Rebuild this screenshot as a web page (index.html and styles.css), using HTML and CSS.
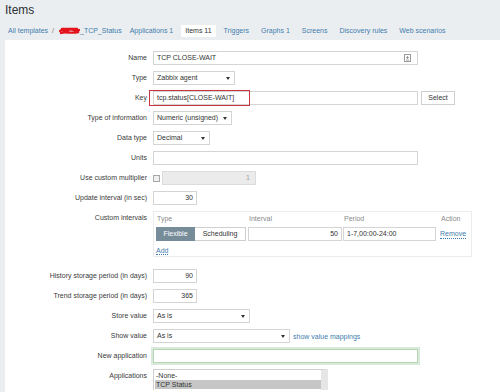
FILE: index.html
```html
<!DOCTYPE html>
<html lang="en">
<head>
    <meta charset="UTF-8">
    <title>Items</title>
    <link rel="stylesheet" href="styles.css">
</head>
<body>
    <h1 class="title">Items</h1>
    <nav class="tabs">
        <a class="crumb" href="#">All templates</a>
        <span class="sep">/</span>
        <a class="host" href="#"><svg class="scribble" width="21" height="8" viewBox="0 0 21 8"><path d="M1 4 C4 1 7 6 10 3 S16 6 20 3 M2 6 C6 4 12 7 19 5 M3 2 L18 2" stroke="#e3141c" stroke-width="2.4" fill="none" stroke-linecap="round"/></svg>_TCP_Status</a>
        <a href="#">Applications 1</a>
        <span class="tab-active">Items 11</span>
        <a href="#">Triggers</a>
        <a href="#">Graphs 1</a>
        <a href="#">Screens</a>
        <a href="#">Discovery rules</a>
        <a href="#">Web scenarios</a>
    </nav>
    <div class="panel">
        <div class="form">
            <div class="label">Name</div>
            <div class="field">
                <div class="input w-wide name-input">
                    <span>TCP CLOSE-WAIT</span>
                    <svg width="7" height="8" viewBox="0 0 7 8"><rect x="0.5" y="0.5" width="6" height="7" fill="#fff" stroke="#9a9a9a"/><path d="M3.5 2 V5 M2 3.5 H5 M2 6 H5" stroke="#8a8a8a" stroke-width="0.8"/></svg>
                </div>
            </div>

            <div class="label">Type</div>
            <div class="field"><div class="input select w-type">Zabbix agent</div></div>

            <div class="label">Key</div>
            <div class="field">
                <div class="key-wrap"><div class="input w-wide">tcp.status[CLOSE-WAIT]</div></div>
                <div class="button">Select</div>
            </div>

            <div class="label">Type of information</div>
            <div class="field"><div class="input select w-info">Numeric (unsigned)</div></div>

            <div class="label">Data type</div>
            <div class="field"><div class="input select w-data">Decimal</div></div>

            <div class="label">Units</div>
            <div class="field"><div class="input w-wide"></div></div>

            <div class="label">Use custom multiplier</div>
            <div class="field tight">
                <span class="check"></span>
                <div class="input disabled w-mult">1</div>
            </div>

            <div class="label">Update interval (in sec)</div>
            <div class="field"><div class="input w-num">30</div></div>

            <div class="label top">Custom intervals</div>
            <div class="field">
                <div class="intervals">
                    <div class="th">Type</div>
                    <div class="th">Interval</div>
                    <div class="th">Period</div>
                    <div class="th">Action</div>

                    <div class="seg">
                        <span class="seg-on">Flexible</span>
                        <span class="seg-off">Scheduling</span>
                    </div>
                    <div class="input w-int num">50</div>
                    <div class="input w-period">1-7,00:00-24:00</div>
                    <div class="cell-link"><a class="action" href="#">Remove</a></div>

                    <div class="add"><a class="action" href="#">Add</a></div>
                </div>
            </div>

            <div class="label">History storage period (in days)</div>
            <div class="field"><div class="input w-num">90</div></div>

            <div class="label">Trend storage period (in days)</div>
            <div class="field"><div class="input w-num">365</div></div>

            <div class="label">Store value</div>
            <div class="field"><div class="input select w-store">As is</div></div>

            <div class="label">Show value</div>
            <div class="field">
                <div class="input select w-show">As is</div>
                <a class="link" href="#">show value mappings</a>
            </div>

            <div class="label">New application</div>
            <div class="field"><div class="input w-wide focus"></div></div>

            <div class="label top">Applications</div>
            <div class="field">
                <div class="listbox">
                    <div class="opt">-None-</div>
                    <div class="opt selected">TCP Status</div>
                </div>
            </div>
        </div>
    </div>
</body>
</html>
```

FILE: styles.css
```css
html, body {
    height: 100%;
    overflow: hidden;
}
body {
    margin: 0;
    background-color: #ebeef0;
    font-family: "Liberation Sans", Arial, sans-serif;
    font-size: 7px;
    color: #3b3b3b;
}
.title {
    margin: 0;
    padding: 3px 5px 0;
    font-size: 12px;
    line-height: 14px;
    font-weight: normal;
    color: #2b3034;
}
.tabs {
    display: flex;
    align-items: center;
    margin-top: 8px;
    padding-left: 4px;
    height: 12px;
    line-height: 12px;
}
.tabs a {
    color: #3f7cad;
    text-decoration: none;
    padding: 0 4px;
    margin-right: 4px;
}
.tabs .crumb {
    margin-right: 0;
}
.tabs .sep {
    color: #777;
    padding-right: 4px;
}
.tabs .host {
    display: flex;
    align-items: center;
    padding: 0 4px 0 0;
    margin-right: 0;
}
.scribble {
    margin-left: 1px;
}
.tab-active {
    background-color: #fff;
    color: #333;
    padding: 0 4px;
    margin-right: 4px;
}
.panel {
    box-sizing: border-box;
    margin: 3px 0 0 5px;
    background-color: #fff;
    padding-top: 11px;
    height: 352px;
    overflow: hidden;
}
.form {
    display: grid;
    grid-template-columns: 142px 1fr;
    column-gap: 6px;
    row-gap: 6px;
}
.label {
    text-align: right;
    line-height: 14px;
    white-space: nowrap;
    color: #3b3b3b;
}
.label.top {
    align-self: start;
}
.field {
    display: flex;
    align-items: center;
    gap: 3px;
    min-height: 14px;
}
.field.tight {
    gap: 2px;
}
.input {
    box-sizing: border-box;
    height: 14px;
    border: 1px solid #d4d4d4;
    background-color: #fff;
    padding: 0 3px;
    line-height: 12px;
    color: #333;
    white-space: nowrap;
}
.w-wide { width: 265px; }
.w-type { width: 82px; }
.w-info { width: 79px; }
.w-data { width: 57px; }
.w-num { width: 44px; text-align: right; }
.w-mult { width: 94px; }
.w-store { width: 97px; }
.w-show { width: 137px; }
.w-int { width: 94px; }
.w-period { width: 93px; }
.num { text-align: right; }

.name-input {
    display: flex;
    justify-content: space-between;
    align-items: center;
    padding-right: 6px;
}
.select {
    display: flex;
    justify-content: space-between;
    align-items: center;
    padding-right: 4px;
}
.select::after {
    content: "";
    border-left: 2px solid transparent;
    border-right: 2px solid transparent;
    border-top: 3px solid #333;
}
.key-wrap {
    position: relative;
}
.key-wrap::before {
    content: "";
    position: absolute;
    left: -4px;
    top: -1px;
    width: 101px;
    height: 16px;
    box-sizing: border-box;
    border: 1.5px solid #c9343f;
}
.button {
    box-sizing: border-box;
    width: 34px;
    height: 14px;
    line-height: 12px;
    border: 1px solid #cfcfcf;
    background-color: #fff;
    text-align: center;
    color: #333;
}
.check {
    box-sizing: border-box;
    width: 7px;
    height: 7px;
    border: 1px solid #a8a8a8;
    background-color: #f0f0f0;
}
.disabled {
    background-color: #ebebeb;
    border-color: #dcdcdc;
    color: #a0a0a0;
    text-align: right;
    padding-right: 5px;
}
.intervals {
    box-sizing: border-box;
    width: 319px;
    border: 1px solid #ececec;
    padding: 2px 3px 2px 2px;
    margin-bottom: 6px;
    display: grid;
    grid-template-columns: 92px 95px 97px auto;
    grid-template-rows: 10px 14px 10px;
    row-gap: 3px;
}
.th {
    color: #8a8a8a;
    line-height: 10px;
    padding-left: 1px;
}
.seg {
    display: flex;
}
.seg span {
    box-sizing: border-box;
    height: 14px;
    line-height: 12px;
    text-align: center;
    border: 1px solid #cfcfcf;
}
.seg-on {
    width: 39px;
    background-color: #768d99;
    border-color: #768d99 !important;
    color: #fff;
}
.seg-off {
    width: 51px;
    color: #333;
    border-left: 0 !important;
}
.cell-link {
    display: flex;
    align-items: center;
}
.action {
    color: #3f7cad;
    text-decoration: none;
    border-bottom: 1px dotted #3f7cad;
    line-height: 9px;
}
.add {
    grid-column: 1;
    margin-top: 2px;
    line-height: 10px;
}
.link {
    color: #3f7cad;
    text-decoration: none;
}
.focus {
    border-color: #b7d4b7;
    box-shadow: 0 0 0 2px #d9eadb;
}
.listbox {
    box-sizing: border-box;
    width: 175px;
    height: 21px;
    border: 1px solid #cfcfcf;
    border-right: 7px solid #e6e6e6;
    border-bottom: 0;
    padding: 1px 0 0 1px;
    line-height: 9px;
    color: #333;
}
.opt {
    padding-left: 1px;
}
.opt.selected {
    background-color: #c6c6c6;
}
```
